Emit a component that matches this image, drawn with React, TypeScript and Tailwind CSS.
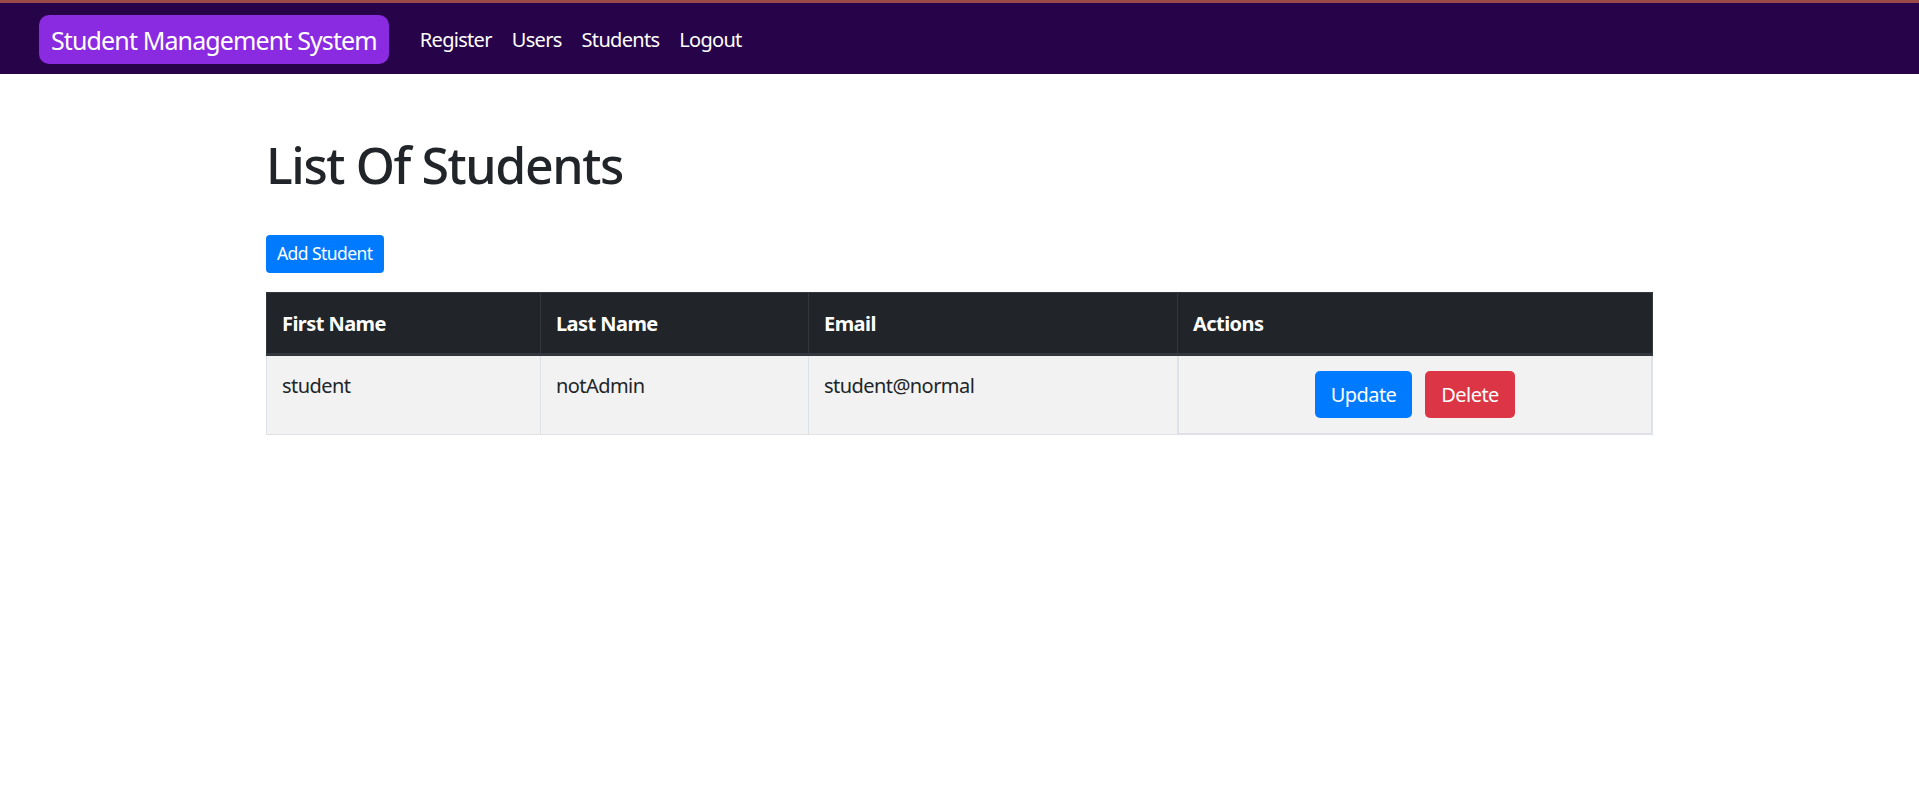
import React from "react";

const students = [{ firstName: "student", lastName: "notAdmin", email: "student@normal" }];

const links = ["Register", "Users", "Students", "Logout"];

/** Barra superior con marca y enlaces. */
function NavBar() {
  return (
    <nav className="h-[74px] border-t-[3px] border-[#9b4a4a] bg-[#27044a] flex items-center pl-[39px] pt-[1px]">
      <a className="h-[49px] flex items-center px-[12px] pt-[2px] rounded-[10px] bg-[#8a2be2] text-white text-[25px] leading-none tracking-[-0.035em] mr-[21px]">
        Student Management System
      </a>
      <ul className="flex items-center pt-[2px]">
        {links.map((l) => (
          <li key={l}>
            <a className="px-[10px] text-white text-[20px] leading-[30px] tracking-[-0.035em]">{l}</a>
          </li>
        ))}
      </ul>
    </nav>
  );
}

export default function App() {
  return (
    <div className="min-h-screen bg-white text-[#212529] font-['Noto_Sans',sans-serif] tracking-[-0.035em]">
      <NavBar />
      <main className="w-[1387px] mx-auto pt-[61px]">
        <h1 className="text-[50px] leading-[60px] font-medium mb-[40px] tracking-[-0.028em]">List Of Students</h1>
        <button className="h-[38px] px-[11px] rounded-[4px] bg-[#007bff] text-white text-[17.5px] leading-none mb-[19px]">
          Add Student
        </button>
        <table className="w-full border-collapse text-[20px] leading-[30px]">
          <thead>
            <tr className="bg-[#212529] text-white text-left">
              <th className="w-[274px] px-[15px] pt-[16px] pb-[14px] border border-[#32383e] border-b-[3px] font-bold">First Name</th>
              <th className="w-[268px] px-[15px] pt-[16px] pb-[14px] border border-[#32383e] border-b-[3px] font-bold">Last Name</th>
              <th className="w-[369px] px-[15px] pt-[16px] pb-[14px] border border-[#32383e] border-b-[3px] font-bold">Email</th>
              <th className="px-[15px] pt-[16px] pb-[14px] border border-[#32383e] border-b-[3px] font-bold">Actions</th>
            </tr>
          </thead>
          <tbody>
            {students.map((s) => (
              <tr key={s.email} className="bg-[#f2f2f2]">
                <td className="p-[15px] align-top border border-[#dee2e6]">{s.firstName}</td>
                <td className="p-[15px] align-top border border-[#dee2e6]">{s.lastName}</td>
                <td className="p-[15px] align-top border border-[#dee2e6]">{s.email}</td>
                <td className="p-[15px] align-top border-2 border-[#dee2e6] text-center">
                  <button className="h-[47px] px-[16px] rounded-[5px] bg-[#007bff] text-white mr-[13px]">Update</button>
                  <button className="h-[47px] px-[16px] rounded-[5px] bg-[#dc3545] text-white">Delete</button>
                </td>
              </tr>
            ))}
          </tbody>
        </table>
      </main>
    </div>
  );
}
